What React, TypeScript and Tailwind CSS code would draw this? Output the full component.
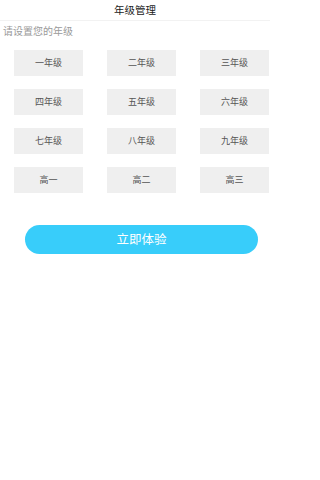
const grades = ['一年级', '二年级', '三年级', '四年级', '五年级', '六年级', '七年级', '八年级', '九年级', '高一', '高二', '高三'];

export default function App() {
  return (
    <div
      className="w-[270px] h-[480px] bg-white"
      style={{ fontFamily: '"Noto Sans CJK SC", "Noto Sans", sans-serif' }}
    >
      <header className="h-[21px] flex items-center justify-center border-b border-[#f2f2f2] text-[10.5px] text-[#222]">
        年级管理
      </header>
      <p className="pl-[3px] pt-[2px] text-[10px] leading-[16px] text-[#9a9a9a]">请设置您的年级</p>
      <div className="mt-[11px] grid grid-cols-[69px_69px_69px] gap-x-[24px] gap-y-[13px] pl-[14px]">
        {grades.map((g) => (
          <div
            key={g}
            className="h-[26px] flex items-center justify-center bg-[#efefef] text-[9px] text-[#555]"
          >
            {g}
          </div>
        ))}
      </div>
      <div className="mt-[32px] pl-[25px]">
        <button className="w-[233px] h-[29px] rounded-full bg-[#38cdfa] text-white text-[12.5px]">
          立即体验
        </button>
      </div>
    </div>
  );
}
